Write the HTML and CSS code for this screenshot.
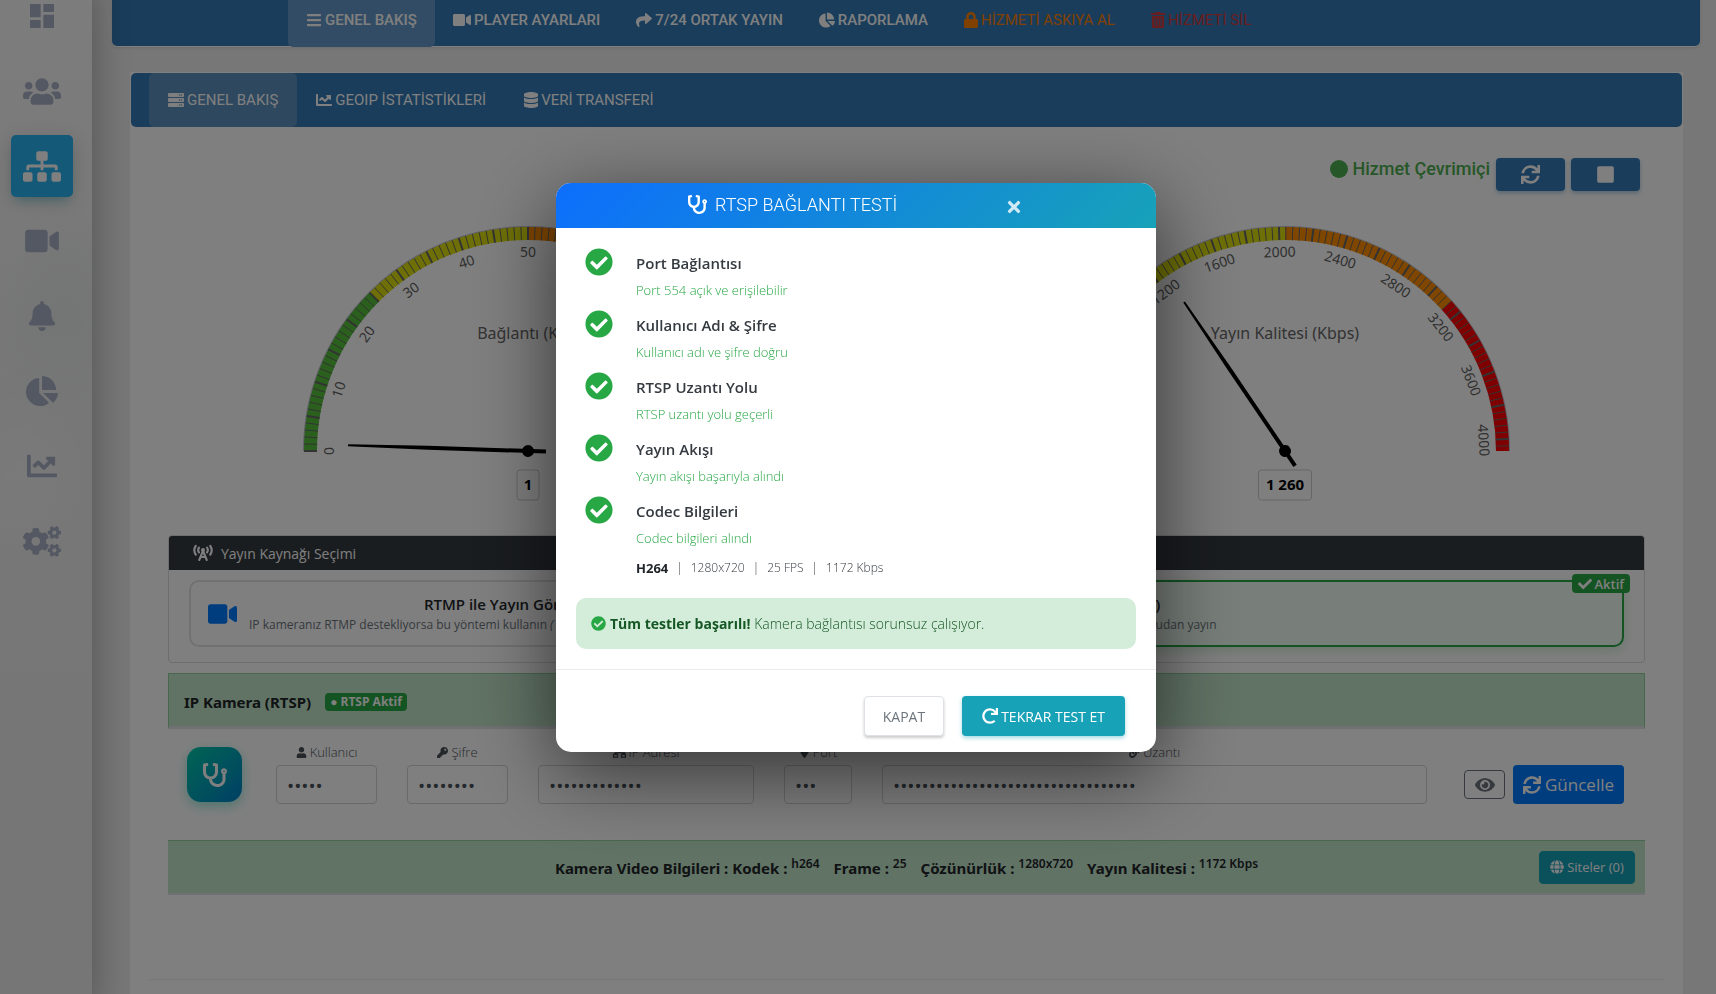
FILE: index.html
```html
<!DOCTYPE html>
<html lang="tr">
<head>
<meta charset="UTF-8" />
<meta name="viewport" content="width=device-width, initial-scale=1" />
<title>Genel Bakış</title>
<link rel="stylesheet" href="styles.css">
</head>
<body>

<!-- Icon sprite -->
<svg class="sprite" aria-hidden="true">
  <symbol id="i-dashboard" viewBox="0 0 24 24"><path d="M3 13h8V3H3v10zm0 8h8v-6H3v6zm10 0h8V11h-8v10zm0-18v6h8V3h-8z"/></symbol>
  <symbol id="i-users" viewBox="0 0 640 512"><path d="M96 224c35.3 0 64-28.7 64-64s-28.7-64-64-64-64 28.7-64 64 28.7 64 64 64zm448 0c35.3 0 64-28.7 64-64s-28.7-64-64-64-64 28.7-64 64 28.7 64 64 64zm32 32h-64c-17.6 0-33.5 7.1-45.1 18.6 40.3 22.1 68.9 62 75.1 109.4h66c17.7 0 32-14.3 32-32v-32c0-35.3-28.7-64-64-64zm-256 0c61.9 0 112-50.1 112-112S381.9 32 320 32 208 82.1 208 144s50.1 112 112 112zm76.8 32h-8.3c-20.8 10-43.9 16-68.5 16s-47.6-6-68.5-16h-8.3C179.6 288 128 339.6 128 403.2V432c0 26.5 21.5 48 48 48h288c26.5 0 48-21.5 48-48v-28.8c0-63.6-51.6-115.2-115.2-115.2zm-223.7-13.4C161.5 263.1 145.6 256 128 256H64c-35.3 0-64 28.7-64 64v32c0 17.7 14.3 32 32 32h65.9c6.3-47.4 34.9-87.3 75.2-109.4z"/></symbol>
  <symbol id="i-sitemap" viewBox="0 0 640 512"><path d="M128 352H32c-17.67 0-32 14.33-32 32v96c0 17.67 14.33 32 32 32h96c17.67 0 32-14.33 32-32v-96c0-17.67-14.33-32-32-32zm-24-80h192v48h48v-48h192v48h48v-57.59c0-21.17-17.23-38.41-38.41-38.41H344v-64h40c17.67 0 32-14.33 32-32V32c0-17.67-14.33-32-32-32H256c-17.67 0-32 14.33-32 32v96c0 17.67 14.33 32 32 32h40v64H94.41C73.23 224 56 241.23 56 262.41V320h48v-48zm264 80h-96c-17.67 0-32 14.33-32 32v96c0 17.67 14.33 32 32 32h96c17.67 0 32-14.33 32-32v-96c0-17.67-14.33-32-32-32zm240 0h-96c-17.67 0-32 14.33-32 32v96c0 17.67 14.33 32 32 32h96c17.67 0 32-14.33 32-32v-96c0-17.67-14.33-32-32-32z"/></symbol>
  <symbol id="i-video" viewBox="0 0 576 512"><path d="M336.2 64H47.8C21.4 64 0 85.4 0 111.8v288.4C0 426.6 21.4 448 47.8 448h288.4c26.4 0 47.8-21.4 47.8-47.8V111.8c0-26.4-21.4-47.8-47.8-47.8zm189.4 37.7L416 177.3v157.4l109.6 75.5c21.2 14.6 50.4-.3 50.4-25.8V127.5c0-25.4-29.1-40.4-50.4-25.8z"/></symbol>
  <symbol id="i-bell" viewBox="0 0 448 512"><path d="M224 512c35.32 0 63.97-28.65 63.97-64H160.03c0 35.35 28.65 64 63.97 64zm215.39-149.71c-19.32-20.76-55.47-51.99-55.47-154.29 0-77.7-54.48-139.9-127.94-155.16V32c0-17.67-14.32-32-31.98-32s-31.98 14.33-31.98 32v20.84C118.56 68.1 64.08 130.3 64.08 208c0 102.3-36.15 133.53-55.47 154.29-6 6.45-8.66 14.16-8.61 21.71.11 16.4 12.98 32 32.1 32h383.8c19.12 0 32-15.6 32.1-32 .05-7.55-2.61-15.27-8.61-21.71z"/></symbol>
  <symbol id="i-pie" viewBox="0 0 544 512"><path d="M527.79 288H290.5l158.03 158.03c6.04 6.04 15.98 6.53 22.19.68 38.7-36.46 65.32-85.61 73.13-140.86 1.34-9.46-6.51-17.85-16.06-17.85zm-15.83-64.8C503.72 103.74 408.26 8.28 288.8.04 279.68-.59 272 7.1 272 16.24V240h223.77c9.14 0 16.82-7.68 16.19-16.8zM224 288V50.71c0-9.55-8.39-17.4-17.84-16.06C86.99 51.49-4.1 155.6.14 280.37 4.5 408.51 114.83 513.59 243.03 511.98c50.4-.63 96.97-16.87 135.26-44.03 7.9-5.6 8.42-17.23 1.57-24.08L224 288z"/></symbol>
  <symbol id="i-line" viewBox="0 0 512 512"><path d="M496 384H64V80c0-8.84-7.16-16-16-16H16C7.16 64 0 71.16 0 80v336c0 17.67 14.33 32 32 32h464c8.84 0 16-7.16 16-16v-32c0-8.84-7.16-16-16-16zM464 96H345.94c-21.38 0-32.09 25.85-16.97 40.97l32.4 32.4L288 242.75l-73.37-73.37c-12.5-12.5-32.76-12.5-45.25 0l-68.69 68.69c-6.25 6.25-6.25 16.38 0 22.63l22.62 22.62c6.25 6.25 16.38 6.25 22.63 0L192 237.25l73.37 73.37c12.5 12.5 32.76 12.5 45.25 0l96-96 32.4 32.4c15.12 15.12 40.97 4.41 40.97-16.97V112c.01-8.84-7.15-16-15.99-16z"/></symbol>
  <symbol id="i-cogs" viewBox="0 0 640 512"><path d="M512.1 191l-8.2 14.3c-3 5.3-9.4 7.5-15.1 5.4-11.8-4.4-22.6-10.7-32.1-18.6-4.6-3.8-5.8-10.5-2.8-15.7l8.2-14.3c-6.9-8-12.3-17.3-15.9-27.4h-16.5c-6 0-11.2-4.3-12.2-10.3-2-12-2.1-24.6 0-37.1 1-6 6.2-10.4 12.2-10.4h16.5c3.6-10.1 9-19.4 15.9-27.4l-8.2-14.3c-3-5.2-1.9-11.9 2.8-15.7 9.5-7.9 20.4-14.2 32.1-18.6 5.7-2.1 12.1.1 15.1 5.4l8.2 14.3c10.5-1.9 21.2-1.9 31.7 0L552 6.3c3-5.3 9.4-7.5 15.1-5.4 11.8 4.4 22.6 10.7 32.1 18.6 4.6 3.8 5.8 10.5 2.8 15.7l-8.2 14.3c6.9 8 12.3 17.3 15.9 27.4h16.5c6 0 11.2 4.3 12.2 10.3 2 12 2.1 24.6 0 37.1-1 6-6.2 10.4-12.2 10.4h-16.5c-3.6 10.1-9 19.4-15.9 27.4l8.2 14.3c3 5.2 1.9 11.9-2.8 15.7-9.5 7.9-20.4 14.2-32.1 18.6-5.7 2.1-12.1-.1-15.1-5.4l-8.2-14.3c-10.4 1.9-21.2 1.9-31.7 0zm-10.5-58.8c38.5 29.6 82.4-14.3 52.8-52.8-38.5-29.7-82.4 14.3-52.8 52.8zM386.3 286.1l33.7 16.8c10.1 5.8 14.5 18.1 10.5 29.1-8.9 24.2-26.4 46.4-42.6 65.8-7.4 8.9-20.2 11.1-30.3 5.3l-29.1-16.8c-16 13.7-34.6 24.6-54.9 31.7v33.6c0 11.6-8.3 21.6-19.7 23.6-24.6 4.2-50.4 4.4-75.9 0-11.5-2-20-11.9-20-23.6V418c-20.3-7.2-38.9-18-54.9-31.7L74 403c-10 5.8-22.9 3.6-30.3-5.3-16.2-19.4-33.3-41.6-42.2-65.7-4-10.9.4-23.2 10.5-29.1l33.3-16.8c-3.9-20.9-3.9-42.4 0-63.4L12 205.8c-10.1-5.8-14.6-18.1-10.5-29 8.9-24.2 26-46.4 42.2-65.8 7.4-8.9 20.2-11.1 30.3-5.3l29.1 16.8c16-13.7 34.6-24.6 54.9-31.7V57.1c0-11.5 8.2-21.5 19.6-23.5 24.6-4.2 50.5-4.4 76-.1 11.5 2 20 11.9 20 23.6v33.6c20.3 7.2 38.9 18 54.9 31.7l29.1-16.8c10-5.8 22.9-3.6 30.3 5.3 16.2 19.4 33.2 41.6 42.1 65.8 4 10.9.1 23.2-10 29.1l-33.7 16.8c3.9 21 3.9 42.5 0 63.5zm-117.6 21.1c59.2-77-28.7-164.9-105.7-105.7-59.2 77 28.7 164.9 105.7 105.7zm243.4 182.7l-8.2 14.3c-3 5.3-9.4 7.5-15.1 5.4-11.8-4.4-22.6-10.7-32.1-18.6-4.6-3.8-5.8-10.5-2.8-15.7l8.2-14.3c-6.9-8-12.3-17.3-15.9-27.4h-16.5c-6 0-11.2-4.3-12.2-10.3-2-12-2.1-24.6 0-37.1 1-6 6.2-10.4 12.2-10.4h16.5c3.6-10.1 9-19.4 15.9-27.4l-8.2-14.3c-3-5.2-1.9-11.9 2.8-15.7 9.5-7.9 20.4-14.2 32.1-18.6 5.7-2.1 12.1.1 15.1 5.4l8.2 14.3c10.5-1.9 21.2-1.9 31.7 0l8.2-14.3c3-5.3 9.4-7.5 15.1-5.4 11.8 4.4 22.6 10.7 32.1 18.6 4.6 3.8 5.8 10.5 2.8 15.7l-8.2 14.3c6.9 8 12.3 17.3 15.9 27.4h16.5c6 0 11.2 4.3 12.2 10.3 2 12 2.1 24.6 0 37.1-1 6-6.2 10.4-12.2 10.4h-16.5c-3.6 10.1-9 19.4-15.9 27.4l8.2 14.3c3 5.2 1.9 11.9-2.8 15.7-9.5 7.9-20.4 14.2-32.1 18.6-5.7 2.1-12.1-.1-15.1-5.4l-8.2-14.3c-10.4 1.9-21.2 1.9-31.7 0zM501.6 431c38.5 29.6 82.4-14.3 52.8-52.8-38.5-29.6-82.4 14.3-52.8 52.8z"/></symbol>
  <symbol id="i-bars" viewBox="0 0 448 512"><path d="M16 132h416c8.837 0 16-7.163 16-16V76c0-8.837-7.163-16-16-16H16C7.163 60 0 67.163 0 76v40c0 8.837 7.163 16 16 16zm0 160h416c8.837 0 16-7.163 16-16v-40c0-8.837-7.163-16-16-16H16c-8.837 0-16 7.163-16 16v40c0 8.837 7.163 16 16 16zm0 160h416c8.837 0 16-7.163 16-16v-40c0-8.837-7.163-16-16-16H16c-8.837 0-16 7.163-16 16v40c0 8.837 7.163 16 16 16z"/></symbol>
  <symbol id="i-share" viewBox="0 0 512 512"><path d="M503.691 189.836L327.687 37.851C312.281 24.546 288 35.347 288 56.015v80.053C127.371 137.907 0 170.1 0 322.326c0 61.441 39.581 122.309 83.333 154.132 13.653 9.931 33.111-2.533 28.077-18.631C66.066 312.814 132.917 274.316 288 272.085V360c0 20.7 24.3 31.453 39.687 18.164l176.004-152c11.071-9.562 11.086-26.753 0-36.328z"/></symbol>
  <symbol id="i-lock" viewBox="0 0 448 512"><path d="M400 224h-24v-72C376 68.2 307.8 0 224 0S72 68.2 72 152v72H48c-26.5 0-48 21.5-48 48v192c0 26.5 21.5 48 48 48h352c26.5 0 48-21.5 48-48V272c0-26.5-21.5-48-48-48zm-104 0H152v-72c0-39.7 32.3-72 72-72s72 32.3 72 72v72z"/></symbol>
  <symbol id="i-trash" viewBox="0 0 448 512"><path d="M32 464a48 48 0 0 0 48 48h288a48 48 0 0 0 48-48V128H32zm272-256a16 16 0 0 1 32 0v224a16 16 0 0 1-32 0zm-96 0a16 16 0 0 1 32 0v224a16 16 0 0 1-32 0zm-96 0a16 16 0 0 1 32 0v224a16 16 0 0 1-32 0zM432 32H312l-9.4-18.7A24 24 0 0 0 281.1 0H166.8a23.72 23.72 0 0 0-21.4 13.3L136 32H16A16 16 0 0 0 0 48v32a16 16 0 0 0 16 16h416a16 16 0 0 0 16-16V48a16 16 0 0 0-16-16z"/></symbol>
  <symbol id="i-server" viewBox="0 0 512 512"><path fill-rule="evenodd" d="M32 32h448a32 32 0 0 1 32 32v64a32 32 0 0 1-32 32H32a32 32 0 0 1-32-32V64a32 32 0 0 1 32-32zM408 96a24 24 0 1 0 48 0 24 24 0 1 0-48 0zM344 96a24 24 0 1 0 48 0 24 24 0 1 0-48 0zM32 192h448a32 32 0 0 1 32 32v64a32 32 0 0 1-32 32H32a32 32 0 0 1-32-32v-64a32 32 0 0 1 32-32zM408 256a24 24 0 1 0 48 0 24 24 0 1 0-48 0zM344 256a24 24 0 1 0 48 0 24 24 0 1 0-48 0zM32 352h448a32 32 0 0 1 32 32v64a32 32 0 0 1-32 32H32a32 32 0 0 1-32-32v-64a32 32 0 0 1 32-32zM408 416a24 24 0 1 0 48 0 24 24 0 1 0-48 0zM344 416a24 24 0 1 0 48 0 24 24 0 1 0-48 0z"/></symbol>
  <symbol id="i-database" viewBox="0 0 448 512"><path d="M448 73.143v45.714C448 159.143 347.667 192 224 192S0 159.143 0 118.857V73.143C0 32.857 100.333 0 224 0s224 32.857 224 73.143zM448 176v102.857C448 319.143 347.667 352 224 352S0 319.143 0 278.857V176c48.125 33.143 136.208 48.572 224 48.572S399.874 209.143 448 176zm0 160v102.857C448 479.143 347.667 512 224 512S0 479.143 0 438.857V336c48.125 33.143 136.208 48.572 224 48.572S399.874 369.143 448 336z"/></symbol>
  <symbol id="i-sync" viewBox="0 0 512 512"><path d="M440.65 12.57l4 82.77A247.16 247.16 0 0 0 255.83 8C134.73 8 33.91 94.92 12.29 209.82A12 12 0 0 0 24.09 224h49.05a12 12 0 0 0 11.67-9.26 175.91 175.91 0 0 1 317-56.94l-101.46-4.86a12 12 0 0 0-12.57 12v47.41a12 12 0 0 0 12 12H500a12 12 0 0 0 12-12V12a12 12 0 0 0-12-12h-47.37a12 12 0 0 0-11.98 12.57zM255.83 432a175.61 175.61 0 0 1-146-77.8l101.8 4.87a12 12 0 0 0 12.57-12v-47.4a12 12 0 0 0-12-12H12a12 12 0 0 0-12 12V500a12 12 0 0 0 12 12h47.35a12 12 0 0 0 12-12.6l-4.15-82.57A247.17 247.17 0 0 0 255.83 504c121.11 0 221.93-86.92 243.55-201.82a12 12 0 0 0-11.8-14.18h-49.05a12 12 0 0 0-11.67 9.26A175.86 175.86 0 0 1 255.83 432z"/></symbol>
  <symbol id="i-stop" viewBox="0 0 448 512"><path d="M400 32H48C21.5 32 0 53.5 0 80v352c0 26.5 21.5 48 48 48h352c26.5 0 48-21.5 48-48V80c0-26.5-21.5-48-48-48z"/></symbol>
  <symbol id="i-tower" viewBox="0 0 640 512"><g fill="none" stroke="currentColor" stroke-width="68" stroke-linecap="round"><path d="M88 30C28 120 28 220 88 310M552 30c60 90 60 190 0 280M190 85c-30 45-30 105 0 150M450 85c30 45 30 105 0 150"/><path d="M320 185L200 480M320 185l120 295M240 385h160"/></g><circle cx="320" cy="160" r="64"/></symbol>
  <symbol id="i-user" viewBox="0 0 448 512"><path d="M224 256c70.7 0 128-57.3 128-128S294.7 0 224 0 96 57.3 96 128s57.3 128 128 128zm89.6 32h-16.7c-22.2 10.2-46.9 16-72.9 16s-50.6-5.8-72.9-16h-16.7C60.2 288 0 348.2 0 422.4V464c0 26.5 21.5 48 48 48h352c26.5 0 48-21.5 48-48v-41.6c0-74.2-60.2-134.4-134.4-134.4z"/></symbol>
  <symbol id="i-key" viewBox="0 0 512 512"><path d="M512 176.001C512 273.203 433.202 352 336 352c-11.22 0-22.19-1.062-32.827-3.069l-24.012 27.014A23.999 23.999 0 0 1 261.223 384H224v40c0 13.255-10.745 24-24 24h-40v40c0 13.255-10.745 24-24 24H24c-13.255 0-24-10.745-24-24v-78.059c0-6.365 2.529-12.47 7.029-16.971l161.802-161.802C163.108 213.814 160 195.271 160 176 160 78.798 238.797.001 335.999 0 433.488-.001 512 78.511 512 176.001zM336 128c0 26.51 21.49 48 48 48s48-21.49 48-48-21.49-48-48-48-48 21.49-48 48z"/></symbol>
  <symbol id="i-network" viewBox="0 0 640 512"><path fill-rule="evenodd" d="M192 0h256v192H352v48h256v80h48v192H384V320h64v-32H192v32h64v192H0V320h80v-80h208v-48h-96zM256 64v64h128V64zM64 384v64h128v-64zm384 0v64h128v-64z"/></symbol>
  <symbol id="i-pin" viewBox="0 0 384 512"><path d="M172 502C27 291 0 269.400 0 192a192 192 0 0 1 384 0c0 77.400-27 99-172 310a24 24 0 0 1-40 0z"/></symbol>
  <symbol id="i-link" viewBox="0 0 512 512"><path d="M326.612 185.391c59.747 59.809 58.927 155.698.36 214.59-.11.12-.24.25-.36.37l-67.2 67.2c-59.27 59.27-155.699 59.262-214.96 0-59.27-59.26-59.27-155.7 0-214.96l37.106-37.106c9.84-9.84 26.786-3.3 27.294 10.606.648 17.722 3.826 35.527 9.69 52.721 1.986 5.822.567 12.262-3.783 16.612l-13.087 13.087c-28.026 28.026-28.905 73.66-1.155 101.96 28.024 28.579 74.086 28.749 102.325.51l67.2-67.19c28.191-28.191 28.073-73.757 0-101.83-3.701-3.694-7.429-6.564-10.341-8.569a16.037 16.037 0 0 1-6.947-12.606c-.396-10.567 3.348-21.456 11.698-29.806l21.054-21.055c5.521-5.521 14.182-6.199 20.584-1.731a152.482 152.482 0 0 1 20.522 17.197zM467.547 44.449c-59.261-59.262-155.69-59.27-214.96 0l-67.2 67.2c-.12.12-.25.25-.36.37-58.566 58.892-59.387 154.781.36 214.59a152.454 152.454 0 0 0 20.521 17.196c6.402 4.468 15.064 3.789 20.584-1.731l21.054-21.055c8.35-8.35 12.094-19.239 11.698-29.806a16.037 16.037 0 0 0-6.947-12.606c-2.912-2.005-6.64-4.875-10.341-8.569-28.073-28.073-28.191-73.639 0-101.83l67.2-67.19c28.239-28.239 74.3-28.069 102.325.51 27.75 28.3 26.872 73.934-1.155 101.96l-13.087 13.087c-4.35 4.35-5.769 10.79-3.783 16.612 5.864 17.194 9.042 34.999 9.69 52.721.509 13.906 17.454 20.446 27.294 10.606l37.106-37.106c59.271-59.259 59.271-155.699.001-214.959z"/></symbol>
  <symbol id="i-eye" viewBox="0 0 576 512"><path d="M572.52 241.4C518.29 135.59 410.93 64 288 64S57.68 135.64 3.48 241.41a32.35 32.35 0 0 0 0 29.19C57.71 376.41 165.07 448 288 448s230.32-71.64 284.52-177.41a32.35 32.35 0 0 0 0-29.19zM288 400a144 144 0 1 1 144-144 143.93 143.93 0 0 1-144 144zm0-240a95.31 95.31 0 0 0-25.31 3.79 47.85 47.85 0 0 1-66.9 66.9A95.78 95.78 0 1 0 288 160z"/></symbol>
  <symbol id="i-globe" viewBox="0 0 496 512"><path d="M336.5 160C322 70.7 287.8 8 248 8s-74 62.7-88.5 152h177zM152 256c0 22.2 1.2 43.5 3.3 64h185.3c2.1-20.5 3.3-41.8 3.3-64s-1.2-43.5-3.3-64H155.3c-2.1 20.5-3.3 41.8-3.3 64zm324.7-96c-28.6-67.9-86.5-120.4-158-141.6 24.4 33.8 41.2 84.7 50 141.6h108zM177.2 18.4C105.8 39.6 47.8 92.1 19.3 160h108c8.7-56.9 25.5-107.8 49.9-141.6zM487.4 192H372.7c2.1 21 3.3 42.5 3.3 64s-1.2 43-3.3 64h114.6c5.5-20.5 8.6-41.8 8.6-64s-3.1-43.5-8.5-64zM120 256c0-21.5 1.2-43 3.3-64H8.6C3.2 212.5 0 233.8 0 256s3.2 43.5 8.6 64h114.6c-2-21-3.2-42.5-3.2-64zm39.5 96c14.5 89.3 48.7 152 88.5 152s74-62.7 88.5-152h-177zm159.3 141.6c71.4-21.2 129.4-73.7 158-141.6h-108c-8.8 56.9-25.6 107.8-50 141.6zM19.3 352c28.6 67.9 86.5 120.4 158 141.6-24.4-33.8-41.2-84.7-50-141.6h-108z"/></symbol>
  <symbol id="i-steth" viewBox="0 0 512 512"><path d="M447.1 112c-34.2.5-62.3 28.4-63 62.6-.5 24.3 12.5 45.6 32 56.8V344c0 57.3-50.2 104-112 104-60 0-109.2-44.1-111.9-99.2C265 333.8 320 269.2 320 192V36.6c0-11.4-8.1-21.3-19.3-23.5L237.8.5c-13-2.6-25.6 5.8-28.2 18.8L206.4 35c-2.6 13 5.8 25.6 18.8 28.2l30.7 6.1v121.4c0 52.9-42.2 96.7-95.1 97.2-53.4.5-96.9-42.7-96.9-96V69.4l30.7-6.1c13-2.6 21.4-15.2 18.8-28.2l-3.1-15.7C107.7 6.4 95.1-2 82.1.6L19.3 13C8.1 15.3 0 25.1 0 36.6V192c0 77.3 55.1 142 128.1 156.8C130.7 439.2 208.6 512 304 512c97 0 176-75.4 176-168V231.4c19.1-11.1 32-31.7 32-55.4 0-35.7-29.2-64.5-64.9-64zm.9 80c-8.8 0-16-7.2-16-16s7.2-16 16-16 16 7.2 16 16-7.2 16-16 16z"/></symbol>
  <symbol id="i-times" viewBox="0 0 352 512"><path d="M242.72 256l100.07-100.07c12.28-12.28 12.28-32.19 0-44.48l-22.24-22.24c-12.28-12.28-32.19-12.28-44.48 0L176 189.28 75.93 89.21c-12.28-12.28-32.19-12.28-44.48 0L9.21 111.45c-12.28 12.28-12.28 32.19 0 44.48L109.28 256 9.21 356.07c-12.28 12.28-12.28 32.19 0 44.48l22.24 22.24c12.28 12.28 32.2 12.28 44.48 0L176 322.72l100.07 100.07c12.28 12.28 32.2 12.28 44.48 0l22.24-22.24c12.28-12.28 12.28-32.19 0-44.48L242.72 256z"/></symbol>
  <symbol id="i-check" viewBox="0 0 512 512"><path d="M173.898 439.404l-166.4-166.4c-9.997-9.997-9.997-26.206 0-36.204l36.203-36.204c9.997-9.998 26.207-9.998 36.204 0L192 312.69 432.095 72.596c9.997-9.997 26.207-9.997 36.204 0l36.203 36.204c9.997 9.997 9.997 26.206 0 36.204l-294.4 294.401c-9.998 9.997-26.207 9.997-36.204-.001z"/></symbol>
  <symbol id="i-ok" viewBox="0 0 512 512"><path d="M504 256c0 136.967-111.033 248-248 248S8 392.967 8 256 119.033 8 256 8s248 111.033 248 248zM227.314 387.314l184-184c6.248-6.248 6.248-16.379 0-22.627l-22.627-22.627c-6.248-6.249-16.379-6.249-22.628 0L216 308.118l-70.059-70.059c-6.248-6.248-16.379-6.248-22.628 0l-22.627 22.627c-6.248 6.248-6.248 16.379 0 22.627l104 104c6.249 6.249 16.379 6.249 22.628.001z"/></symbol>
  <symbol id="i-redo" viewBox="0 0 512 512"><path d="M500.33 0h-47.41a12 12 0 0 0-12 12.57l4 82.76A247.42 247.42 0 0 0 256 8C119.34 8 7.9 119.53 8 256.19 8.1 393.07 119.1 504 256 504a247.1 247.1 0 0 0 166.18-63.91 12 12 0 0 0 .48-17.43l-34-34a12 12 0 0 0-16.38-.55A176 176 0 1 1 402.1 157.8l-101.53-4.87a12 12 0 0 0-12.57 12v47.41a12 12 0 0 0 12 12h200.33a12 12 0 0 0 12-12V12a12 12 0 0 0-12-12z"/></symbol>
</svg>

<div class="layout">
  <nav class="sidebar">
    <a href="#" aria-label="Panel"><svg class="ic-32"><use href="#i-dashboard"/></svg></a>
    <a href="#" aria-label="Müşteriler"><svg class="ic-38"><use href="#i-users"/></svg></a>
    <a href="#" class="active" aria-label="Hizmetler"><svg class="ic-38"><use href="#i-sitemap"/></svg></a>
    <a href="#" aria-label="Kameralar"><svg class="ic-34"><use href="#i-video"/></svg></a>
    <a href="#" aria-label="Bildirimler"><svg class="ic-30"><use href="#i-bell"/></svg></a>
    <a href="#" aria-label="Raporlar"><svg class="ic-32"><use href="#i-pie"/></svg></a>
    <a href="#" aria-label="İstatistikler"><svg class="ic-30"><use href="#i-line"/></svg></a>
    <a href="#" aria-label="Ayarlar"><svg class="ic-38"><use href="#i-cogs"/></svg></a>
  </nav>

  <main class="main">
    <nav class="topnav">
      <a href="#" class="active"><svg class="ic"><use href="#i-bars"/></svg>GENEL BAKIŞ</a>
      <a href="#"><svg class="ic wide"><use href="#i-video"/></svg>PLAYER AYARLARI</a>
      <a href="#"><svg class="ic"><use href="#i-share"/></svg>7/24 ORTAK YAYIN</a>
      <a href="#"><svg class="ic"><use href="#i-pie"/></svg>RAPORLAMA</a>
      <a href="#" class="warn"><svg class="ic slim"><use href="#i-lock"/></svg>HİZMETİ ASKIYA AL</a>
      <a href="#" class="danger"><svg class="ic slim"><use href="#i-trash"/></svg>HİZMETİ SİL</a>
    </nav>

    <section class="card">
      <nav class="subnav">
        <a href="#" class="active"><svg class="ic"><use href="#i-server"/></svg>GENEL BAKIŞ</a>
        <a href="#"><svg class="ic"><use href="#i-line"/></svg>GEOIP İSTATİSTİKLERİ</a>
        <a href="#"><svg class="ic slim"><use href="#i-database"/></svg>VERİ TRANSFERİ</a>
      </nav>

      <div class="content">
        <div class="status">
          <span class="dot"></span>
          <span class="status-text">Hizmet Çevrimiçi</span>
          <button class="btn-blue" aria-label="Yenile"><svg class="ic-19"><use href="#i-sync"/></svg></button>
          <button class="btn-blue" aria-label="Durdur"><svg class="ic-19"><use href="#i-stop"/></svg></button>
        </div>

        <div class="gauges">
          <svg class="gauge" id="gauge-conn" viewBox="0 0 500 290"></svg>
          <svg class="gauge" id="gauge-rate" viewBox="0 0 500 290"></svg>
        </div>

        <div class="inner">
          <div class="panel">
            <div class="panel-head"><svg class="ic-20"><use href="#i-tower"/></svg>Yayın Kaynağı Seçimi</div>
            <div class="panel-body">
              <div class="source">
                <svg class="ic-29"><use href="#i-video"/></svg>
                <div class="source-text">
                  <strong>RTMP ile Yayın Gönder (Push)</strong>
                  <small>IP kameranız RTMP destekliyorsa bu yöntemi kullanın <em>( Sunucuya yayın )</em></small>
                </div>
              </div>
              <div class="source on">
                <svg class="ic-29"><use href="#i-video"/></svg>
                <div class="source-text short">
                  <strong>RTSP ile Çek (Pull)</strong>
                  <small>IP kameranızdan RTSP ile doğrudan yayın</small>
                </div>
                <span class="tag"><svg class="ic-14"><use href="#i-check"/></svg>Aktif</span>
              </div>
            </div>
          </div>

          <div class="band band-title">
            <strong>IP Kamera (RTSP)</strong>
            <span class="badge">● RTSP Aktif</span>
          </div>

          <form class="camera">
            <button type="button" class="test-btn" aria-label="Bağlantı testi"><svg class="ic-24"><use href="#i-steth"/></svg></button>
            <div class="field w-m">
              <label for="user"><svg class="ic-11"><use href="#i-user"/></svg>Kullanıcı</label>
              <input id="user" type="password" value="admin">
            </div>
            <div class="field w-m">
              <label for="pass"><svg class="ic-11"><use href="#i-key"/></svg>Şifre</label>
              <input id="pass" type="password" value="12345678">
            </div>
            <div class="field w-l">
              <label for="ip"><svg class="ic-13"><use href="#i-network"/></svg>IP Adresi</label>
              <input id="ip" type="password" value="192.168.1.100">
            </div>
            <div class="field w-s">
              <label for="port"><svg class="ic-11"><use href="#i-pin"/></svg>Port</label>
              <input id="port" type="password" value="554">
            </div>
            <div class="field w-fill">
              <label for="path"><svg class="ic-11"><use href="#i-link"/></svg>Uzantı</label>
              <input id="path" type="password" value="/cam/realmonitor?channel=1&amp;subtype">
            </div>
            <div class="actions">
              <button type="button" class="btn-eye" aria-label="Göster"><svg class="ic-20"><use href="#i-eye"/></svg></button>
              <button type="button" class="btn-update"><svg class="ic-18"><use href="#i-sync"/></svg>Güncelle</button>
            </div>
          </form>

          <div class="band band-info">
            <p class="info">
              <span>Kamera Video Bilgileri : Kodek : <sup>h264</sup></span>
              <span>Frame : <sup>25</sup></span>
              <span>Çözünürlük : <sup>1280x720</sup></span>
              <span>Yayın Kalitesi : <sup>1172 Kbps</sup></span>
            </p>
            <button class="btn-sites"><svg class="ic-14"><use href="#i-globe"/></svg>Siteler (0)</button>
          </div>
        </div>
        <hr>
      </div>
    </section>
  </main>
</div>

<!-- RTSP test dialog -->
<div class="overlay">
  <div class="modal" role="dialog" aria-labelledby="modal-title">
    <div class="modal-head">
      <h2 id="modal-title"><svg class="ic-19"><use href="#i-steth"/></svg>RTSP BAĞLANTI TESTİ</h2>
      <button class="close" aria-label="Kapat"><svg class="ic-20"><use href="#i-times"/></svg></button>
    </div>
    <div class="modal-body">
      <ul class="tests">
        <li><svg class="ic-28"><use href="#i-ok"/></svg><div><h3>Port Bağlantısı</h3><p>Port 554 açık ve erişilebilir</p></div></li>
        <li><svg class="ic-28"><use href="#i-ok"/></svg><div><h3>Kullanıcı Adı &amp; Şifre</h3><p>Kullanıcı adı ve şifre doğru</p></div></li>
        <li><svg class="ic-28"><use href="#i-ok"/></svg><div><h3>RTSP Uzantı Yolu</h3><p>RTSP uzantı yolu geçerli</p></div></li>
        <li><svg class="ic-28"><use href="#i-ok"/></svg><div><h3>Yayın Akışı</h3><p>Yayın akışı başarıyla alındı</p></div></li>
        <li><svg class="ic-28"><use href="#i-ok"/></svg><div><h3>Codec Bilgileri</h3><p>Codec bilgileri alındı</p>
          <div class="codec"><b>H264</b><i>|</i><span>1280x720</span><i>|</i><span>25 FPS</span><i>|</i><span>1172 Kbps</span></div></div></li>
      </ul>
      <div class="alert"><svg class="ic-15"><use href="#i-ok"/></svg><span><b>Tüm testler başarılı!</b> Kamera bağlantısı sorunsuz çalışıyor.</span></div>
    </div>
    <div class="modal-foot">
      <button class="btn-close">KAPAT</button>
      <button class="btn-retry"><svg class="ic-16"><use href="#i-redo"/></svg>TEKRAR TEST ET</button>
    </div>
  </div>
</div>

<script src="script.js"></script>
</body>
</html>
```
FILE: styles.css
```css
* { box-sizing: border-box; }

body {
  margin: 0;
  min-height: 100vh;
  background: #eee;
  font-family: "Open Sans", "Noto Sans", sans-serif;
  font-size: 14px;
  color: #212529;
  overflow: hidden;
}

button, input { font-family: inherit; }
button { cursor: pointer; }
a { text-decoration: none; }
svg { fill: currentColor; flex: none; }
.sprite { position: absolute; width: 0; height: 0; }

/* Icon sizes */
.ic { width: 16px; height: 16px; }
.ic.wide { width: 18px; }
.ic.slim { width: 14px; }
.ic-11 { width: 11px; height: 11px; }
.ic-13 { width: 13px; height: 11px; }
.ic-14 { width: 14px; height: 14px; }
.ic-15 { width: 15px; height: 15px; }
.ic-16 { width: 16px; height: 16px; }
.ic-18 { width: 18px; height: 18px; }
.ic-19 { width: 19px; height: 19px; }
.ic-20 { width: 20px; height: 18px; }
.ic-24 { width: 24px; height: 24px; }
.ic-28 { width: 28px; height: 28px; }
.ic-29 { width: 29px; height: 26px; }
.ic-30 { width: 30px; height: 30px; }
.ic-32 { width: 32px; height: 32px; }
.ic-34 { width: 34px; height: 30px; }
.ic-38 { width: 38px; height: 31px; }

.layout {
  display: flex;
  min-height: 100vh;
}

/* Sidebar */
.sidebar {
  position: relative;
  z-index: 2;
  display: flex;
  flex-direction: column;
  align-items: center;
  gap: 13px;
  width: 92px;
  margin-top: -15px;
  padding-right: 8px;
  background:
    radial-gradient(ellipse 70px 90px at 20% 48%, rgba(255,255,255,.35), transparent),
    radial-gradient(ellipse 80px 110px at 70% 32%, rgba(225,228,228,.6), transparent),
    linear-gradient(180deg, #fafafa 0, #f4f4f4 20%, #efefef 40%, #ececec 100%);
  box-shadow: 0 0 38px rgba(0,0,0,.32);
}
.sidebar a {
  display: flex;
  align-items: center;
  justify-content: center;
  width: 62px;
  height: 62px;
  border-radius: 5px;
  color: #a8b0c4;
}
.sidebar a.active {
  color: #fff;
  background: #29b3ee;
  box-shadow: 0 4px 20px rgba(0,0,0,.15), 0 7px 10px -5px rgba(0,188,212,.4);
}

/* Main column */
.main {
  flex: 1;
  margin-top: -7px;
  padding: 0 16px 0 20px;
}

.topnav, .subnav {
  display: flex;
  background: #337ab7;
  font-family: Roboto, sans-serif;
  font-size: 15px;
  border-radius: 5px;
}
.topnav {
  height: 53px;
  padding-left: 176px;
  font-weight: 500;
  box-shadow: 0 1px 0 #fff, 0 2px 3px rgba(0,0,0,.1);
}
.topnav a, .subnav a {
  display: flex;
  align-items: center;
  gap: 3px;
  height: 54px;
  padding: 0 18px;
  border-radius: 5px;
  color: #fff;
}
.topnav a.active { background: #6399c8; }
.topnav a.warn { color: #ff8000; font-weight: 400; }
.topnav a.danger { color: #d03a3e; font-weight: 400; }

.card {
  margin: 26px 17px 0 18px;
  padding: 1px;
  min-height: 940px;
  background: #fff;
}
.subnav { padding-left: 18px; }
.subnav a { padding: 0 19px; }
.subnav a.active { background: #5c90bf; }

.content { padding: 31px 18px 0; }

/* Service status */
.status {
  display: flex;
  gap: 6px;
  padding-right: 24px;
  height: 33px;
}
.dot {
  width: 18px;
  height: 18px;
  margin: 2px 0 0 auto;
  border-radius: 50%;
  background: #4caf50;
}
.status-text {
  margin-left: -2px;
  font: 500 18px/22px Roboto, sans-serif;
  color: #4caf50;
}
.btn-blue {
  display: flex;
  align-items: center;
  justify-content: center;
  width: 69px;
  padding: 0;
  border: 0;
  border-radius: 4px;
  background: #337ab7;
  color: #fff;
  box-shadow: 0 2px 4px rgba(51,122,183,.4);
}

/* Gauges */
.gauges {
  display: flex;
  justify-content: space-around;
  margin-top: 29px;
}
.gauge {
  width: 500px;
  height: 290px;
  font-family: "Noto Sans", sans-serif;
  font-size: 14px;
}
.gauge .label { fill: #606060; }
.gauge .title { fill: #666; font-size: 16px; }
.gauge .value { fill: #000; font-size: 15px; font-weight: 700; }

.inner { padding: 0 19px; }

/* Source selection */
.panel {
  margin-top: 25px;
  border: 1px solid #dcdcdc;
  border-radius: 4px;
}
.panel-head {
  display: flex;
  align-items: center;
  gap: 8px;
  height: 34px;
  padding-left: 24px;
  border-radius: 3px 3px 0 0;
  background: #343a40;
  color: #fff;
  font-size: 14px;
}
.panel-body {
  display: flex;
  gap: 20px;
  padding: 10px 20px 15px;
}
.source {
  position: relative;
  flex: 1;
  display: flex;
  align-items: center;
  gap: 12px;
  height: 67px;
  padding-left: 17px;
  border: 2px solid #dee2e6;
  border-radius: 10px;
  color: #007bff;
}
.source.on {
  border-color: #28a745;
  background: #f0fff4;
  color: #28a745;
  box-shadow: 0 4px 12px rgba(40,167,69,.2);
}
.source-text {
  display: flex;
  flex-direction: column;
  width: 562px;
  text-align: center;
  white-space: nowrap;
  color: #212529;
}
.source-text.short { width: 240px; }
.source-text strong { font-size: 15px; font-weight: 600; line-height: 22px; }
.source-text small { font-size: 12px; line-height: 20px; color: #6c757d; text-align: left; }
.source-text.short small { text-align: right; }
.tag {
  position: absolute;
  top: -8px;
  right: -8px;
  display: flex;
  align-items: center;
  gap: 2px;
  height: 19px;
  padding: 0 6px;
  border-radius: 4px;
  background: #28a745;
  color: #fff;
  font-size: 13px;
  font-weight: 600;
}

/* Green bands */
.band {
  display: flex;
  align-items: center;
  background: #c3e6cb;
  border-top: 1px solid #8fd19e;
  font-family: "Noto Sans", sans-serif;
  font-size: 15px;
}
.band-title {
  height: 56px;
  margin-top: 10px;
  padding: 3px 0 0 15px;
  gap: 14px;
  border-left: 1px solid #8fd19e;
  border-right: 1px solid #8fd19e;
  border-bottom: 3px solid #dee2e6;
}
.band-info {
  height: 55px;
  padding-right: 10px;
  border-bottom: 2px solid #dee2e6;
}
.badge {
  padding: 0 5px;
  border-radius: 4px;
  background: #28a745;
  color: #fff;
  font: 700 12px/18px "Open Sans", sans-serif;
}

/* Camera form */
.camera {
  display: flex;
  align-items: flex-end;
  gap: 30px;
  height: 111px;
  padding: 15px 21px 36px 19px;
}
.test-btn {
  display: flex;
  align-items: center;
  justify-content: center;
  width: 55px;
  height: 55px;
  margin: 0 4px 2px 0;
  border: 0;
  border-radius: 14px;
  background: linear-gradient(135deg, #00c9a7, #0081c9);
  color: #fff;
  box-shadow: 0 4px 12px rgba(0,201,167,.4);
}
.field { display: flex; flex-direction: column; gap: 4px; }
.field label {
  display: flex;
  align-items: center;
  justify-content: center;
  gap: 3px;
  font-size: 13px;
  font-weight: 300;
  line-height: 18px;
  color: #495057;
}
.field input {
  width: 100%;
  height: 39px;
  padding: 2px 10px 0;
  border: 1px solid #ced4da;
  border-radius: 4px;
  background: #fff;
  color: #495057;
  font-size: 19px;
}
.w-s { width: 68px; }
.w-m { width: 101px; }
.w-l { width: 216px; }
.w-fill { flex: 1; }
.actions {
  display: flex;
  align-items: center;
  gap: 8px;
  margin-left: 7px;
}
.btn-eye {
  display: flex;
  align-items: center;
  justify-content: center;
  width: 41px;
  height: 29px;
  padding: 0;
  border: 1px solid #6c757d;
  border-radius: 4px;
  background: none;
  color: #6c757d;
}
.btn-update {
  display: flex;
  align-items: center;
  justify-content: center;
  gap: 4px;
  width: 111px;
  height: 39px;
  padding: 0;
  border: 0;
  border-radius: 4px;
  background: #007bff;
  color: #fff;
  font-size: 17px;
}

.info {
  display: flex;
  justify-content: center;
  gap: 14px;
  flex: 1;
  margin: 0;
  padding: 2px 0 0 106px;
  font-weight: 700;
}
.info sup { font-size: 12px; font-weight: 600; line-height: 0; }
.btn-sites {
  display: flex;
  align-items: center;
  justify-content: center;
  gap: 3px;
  width: 96px;
  height: 33px;
  padding: 0;
  border: 1px solid #17a2b8;
  border-radius: 4px;
  background: #17a2b8;
  color: #fff;
  font: 400 13px "Open Sans", sans-serif;
}

hr {
  margin: 84px 0 0;
  border: 0;
  border-top: 1px solid #eee;
}

/* Modal */
.overlay {
  position: fixed;
  inset: 0;
  z-index: 10;
  display: flex;
  justify-content: center;
  align-items: flex-start;
  padding: 183px 4px 0 0;
  background: rgba(0,0,0,.5);
}
.modal {
  width: 600px;
  border-radius: 15px;
  background: #fff;
  overflow: hidden;
  box-shadow: 0 20px 80px rgba(0,0,0,.6);
}
.modal-head {
  display: flex;
  align-items: center;
  height: 45px;
  padding: 0 132px 2px;
  justify-content: space-between;
  background: linear-gradient(135deg, #0d6efd, #17a2b8);
  color: #fff;
}
.modal-head h2 {
  display: flex;
  align-items: center;
  gap: 8px;
  margin: 0;
  font: 300 18px/24px Roboto, sans-serif;
}
.close {
  display: flex;
  padding: 5px 0 0;
  border: 0;
  background: none;
  color: #fff;
  opacity: .8;
}
.modal-body { padding: 20px; }
.tests {
  margin: 0;
  padding: 0 9px;
  list-style: none;
}
.tests li {
  display: flex;
  gap: 23px;
  min-height: 62px;
}
.tests svg { color: #28a745; }
.tests h3 {
  margin: 3px 0 0;
  font-size: 15px;
  font-weight: 600;
  line-height: 24px;
  color: #343a40;
}
.tests p {
  margin: 5px 0 0;
  font-size: 13px;
  font-weight: 300;
  line-height: 20px;
  color: #28a745;
}
.codec {
  display: flex;
  gap: 8px;
  margin-top: 10px;
  font-size: 12px;
  font-weight: 300;
  line-height: 20px;
  color: #343a40;
}
.codec b { font-size: 13px; font-weight: 700; color: #212529; }
.codec i { font-style: normal; }
.alert {
  display: flex;
  align-items: center;
  gap: 4px;
  height: 51px;
  margin-top: 20px;
  padding: 0 15px;
  border-radius: 10px;
  background: #d4edda;
  color: #155724;
  font-size: 14px;
  font-weight: 300;
}
.alert svg { color: #28a745; }
.alert b { font-weight: 700; }
.modal-foot {
  display: flex;
  align-items: center;
  justify-content: flex-end;
  gap: 18px;
  height: 83px;
  padding: 10px 31px 0;
  border-top: 1px solid #e9ecef;
}
.modal-foot button {
  display: flex;
  align-items: center;
  justify-content: center;
  gap: 3px;
  height: 40px;
  padding: 0 18px;
  border-radius: 4px;
  font-size: 14px;
}
.modal-foot .btn-close {
  border: 1px solid #dee2e6;
  background: #fff;
  color: #6c757d;
  box-shadow: 0 2px 3px rgba(0,0,0,.2);
}
.modal-foot .btn-retry {
  padding: 0 20px;
  border: 0;
  background: #17a2b8;
  color: #fff;
  box-shadow: 0 2px 4px rgba(23,162,184,.4);
}
```
FILE: script.js
```js
// Half circle gauges
const CX = 250, CY = 231, R = 224, BAND = 13;

// Angle 0 is the left end of the dial, 180 the right end
function point(r, deg) {
  const a = Math.PI - deg * Math.PI / 180;
  return [CX + r * Math.cos(a), CY - r * Math.sin(a)];
}

function arc(from, to, color) {
  const r = R - BAND / 2;
  const [x1, y1] = point(r, from);
  const [x2, y2] = point(r, to);
  return `<path d="M${x1} ${y1}A${r} ${r} 0 0 1 ${x2} ${y2}" fill="none" stroke="${color}" stroke-width="${BAND}"/>`;
}

function drawGauge(id, opt) {
  const toDeg = v => v / opt.max * 180;
  let out = `<path d="M${CX - R} ${CY}A${R} ${R} 0 0 1 ${CX + R} ${CY}" fill="none" stroke="#c0c0d0" stroke-width="2"/>`;
  opt.bands.forEach(b => { out += arc(b[0], b[1], b[2]); });

  for (let v = 0; v <= opt.max; v += opt.minor) {
    const major = v % opt.major === 0;
    const [x1, y1] = point(R, toDeg(v));
    const [x2, y2] = point(R - BAND, toDeg(v));
    out += `<line x1="${x1}" y1="${y1}" x2="${x2}" y2="${y2}" stroke="#666" stroke-width="${major ? 2 : 1}"/>`;
  }
  for (let v = 0; v <= opt.max; v += opt.step) {
    const [x, y] = point(194, toDeg(v));
    out += `<text class="label" x="${x}" y="${y}" text-anchor="middle" transform="rotate(${toDeg(v) - 90} ${x} ${y})">${v}</text>`;
  }
  out += `<text class="title" x="${CX}" y="119" text-anchor="middle">${opt.title}</text>`;

  // Needle points left, then turns to the value
  out += `<g transform="rotate(${opt.needle} ${CX} ${CY})">
    <path d="M70 ${CY - 1}L150 ${CY - 2}H268V${CY + 2}H150L70 ${CY + 1}z" fill="#000"/>
    <circle cx="${CX}" cy="${CY}" r="6" fill="#000"/></g>`;
  out += `<rect x="${CX - opt.box / 2}" y="250" width="${opt.box}" height="30" rx="3" fill="none" stroke="#ccc"/>
    <text class="value" x="${CX}" y="270" text-anchor="middle">${opt.text}</text>`;
  document.getElementById(id).innerHTML = out;
}

drawGauge('gauge-conn', {
  max: 100, minor: 1, major: 5, step: 10, needle: 1.8, box: 22, text: '1',
  title: 'Bağlantı (Kişi)',
  bands: [[0, 45, '#55bf3b'], [45, 90, '#dddf0d'], [90, 135, '#ff8c00'], [135, 180, '#ff0000']]
});
drawGauge('gauge-rate', {
  max: 4070, minor: 40, major: 200, step: 400, needle: 55.9, box: 53, text: '1 260',
  title: 'Yayın Kalitesi (Kbps)',
  bands: [[0, 45, '#55bf3b'], [45, 90, '#dddf0d'], [90, 138, '#ff8c00'], [138, 180, '#ff0000']]
});
```
